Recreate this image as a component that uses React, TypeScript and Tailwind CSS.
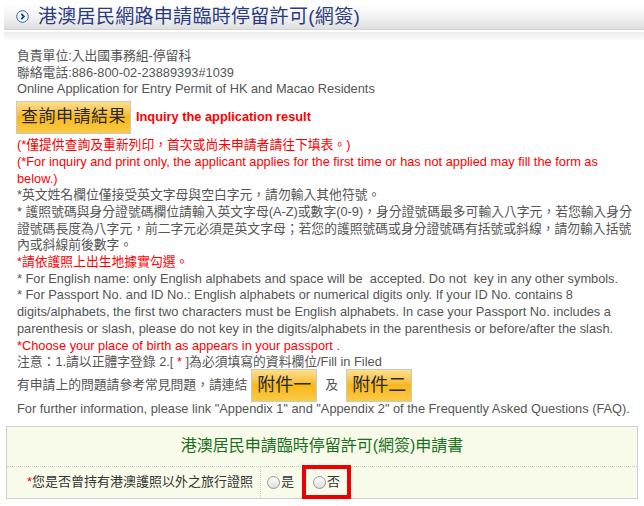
import React from 'react';

const sans = "font-['Liberation_Sans','Noto_Sans_CJK_TC',sans-serif]";

// gold gradient button used for 查詢 / 附件
const GoldButton: React.FC<{ label: string; className?: string }> = ({ label, className }) => (
  <button
    type="button"
    className={
      'flex items-center justify-center border border-[#c9c9c9] bg-gradient-to-b from-[#fde08a] via-[#f7b817] to-[#fbcb45] text-[#2a2a2a] ' +
      (className ?? '')
    }
  >
    {label}
  </button>
);

const Radio: React.FC = () => (
  <span className="inline-block h-[13px] w-[13px] rounded-full border border-[#9a9a9a] bg-gradient-to-b from-white to-[#dcdcdc]" />
);

export default function App() {
  return (
    <div className={`w-[644px] min-h-[506px] bg-white ${sans}`}>
      {/* page title bar */}
      <div className="ml-[4px] mt-[3px] flex h-[27px] items-center gap-[9px] rounded-tl-[6px] border-b border-[#d3d3d3] bg-gradient-to-b from-white via-[#f4f4f4] to-[#dedede] pl-[12px]">
        <svg width="13" height="13" viewBox="0 0 13 13">
          <circle cx="6.5" cy="6.5" r="5.8" fill="#f4f8ff" stroke="#3b5fb0" strokeWidth="1" />
          <path d="M5.3 3.9 L7.9 6.5 L5.3 9.1" fill="none" stroke="#1d3d8f" strokeWidth="1.8" />
        </svg>
        <span className="text-[19px] leading-none tracking-[0.3px] text-[#2b3b80]">
          港澳居民網路申請臨時停留許可(網簽)
        </span>
      </div>
      <div className="ml-[4px] mt-[2px] h-[9px] bg-gradient-to-b from-[#ececec] to-white" />

      {/* notes */}
      <div className="pl-[17px] pr-[4px] pt-[7px] text-[12.8px] leading-[16.7px] text-[#555]">
        <div>負責單位:入出國事務組-停留科</div>
        <div>聯絡電話:886-800-02-23889393#1039</div>
        <div>Online Application for Entry Permit of HK and Macao Residents</div>

        <div className="ml-[-1px] mt-[3px] flex items-center gap-[5px]">
          <GoldButton label="查詢申請結果" className="h-[33px] w-[115px] text-[17px] tracking-[0.5px]" />
          <span className="font-bold text-[#ff0000]">Inquiry the application result</span>
        </div>

        <div className="mt-[3px] text-[#ff0000]">
          <div>(*僅提供查詢及重新列印，首次或尚未申請者請往下填表。)</div>
          <div>
            (*For inquiry and print only, the applicant applies for the first time or has not applied may fill the form as
            below.)
          </div>
        </div>
        <div>*英文姓名欄位僅接受英文字母與空白字元，請勿輸入其他符號。</div>
        <div>
          * 護照號碼與身分證號碼欄位請輸入英文字母(A-Z)或數字(0-9)，身分證號碼最多可輸入八字元，若您輸入身分證號碼長度為八字元，前二字元必須是英文字母；若您的護照號碼或身分證號碼有括號或斜線，請勿輸入括號內或斜線前後數字。
        </div>
        <div className="text-[#ff0000]">*請依護照上出生地據實勾選。</div>
        <div>* For English name: only English alphabets and space will be &nbsp;accepted. Do not &nbsp;key in any other symbols.</div>
        <div>
          * For Passport No. and ID No.: English alphabets or numerical digits only. If your ID No. contains 8
          digits/alphabets, the first two characters must be English alphabets. In case your Passport No. includes a
          parenthesis or slash, please do not key in the digits/alphabets in the parenthesis or before/after the slash.
        </div>
        <div className="text-[#ff0000]">*Choose your place of birth as appears in your passport .</div>
        <div>
          注意：1.請以正體字登錄 2.[ <span className="text-[#ff0000]">*</span> ]為必須填寫的資料欄位/Fill in Filed
        </div>

        <div className="flex h-[29px] items-center">
          <span>有申請上的問題請參考常見問題，請連結</span>
          <GoldButton label="附件一" className="ml-[4px] h-[33px] w-[66px] text-[18px]" />
          <span className="mx-[8px]">及</span>
          <GoldButton label="附件二" className="h-[33px] w-[66px] text-[18px]" />
        </div>
        <div className="mt-[1px]">
          For further information, please link "Appendix 1" and "Appendix 2" of the Frequently Asked Questions (FAQ).
        </div>
      </div>

      {/* application form */}
      <div className="mx-[6px] mt-[8px] border border-[#cfcfcf] bg-[#f8fbea]">
        <div className="flex h-[40px] items-center justify-center border-b border-dotted border-[#c8c8c8] text-[16px] text-[#17701a]">
          港澳居民申請臨時停留許可(網簽)申請書
        </div>
        <div className="flex h-[31px] text-[13px] text-[#333]">
          <div className="flex w-[254px] items-center justify-end border-r border-dotted border-[#c8c8c8] pr-[7px]">
            <span className="text-[#ff0000]">*</span>您是否曾持有港澳護照以外之旅行證照
          </div>
          <div className="flex items-center pl-[6px]">
            <label className="flex items-center gap-[1px]">
              <Radio />
              是
            </label>
            <label className="relative ml-[19px] flex items-center gap-[1px]">
              <Radio />
              否
              <span className="absolute left-[-11px] top-[-7px] h-[34px] w-[49px] border-[4px] border-[#ee0000]" />
            </label>
          </div>
        </div>
      </div>
    </div>
  );
}
